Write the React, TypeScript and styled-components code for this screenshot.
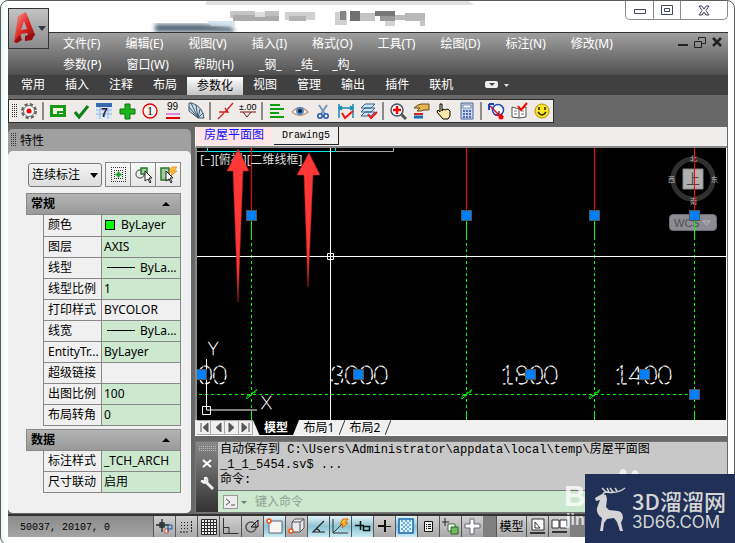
import React from 'react';
import styled, { createGlobalStyle, css } from 'styled-components';

const ui = '"Noto Sans", "Noto Sans CJK SC", sans-serif';
const mono = '"Liberation Mono", "Noto Sans CJK SC", monospace';

const GlobalStyle = createGlobalStyle`
  * { box-sizing: border-box; }
  body { margin: 0; background: #fff; font: 12px/16px ${ui}; color: #000; }
  button { font: inherit; color: inherit; padding: 0; border: 0; background: none; cursor: pointer; }
  svg { display: block; flex: none; }
`;

const Page = styled.div`
  position: relative;
  overflow: hidden;
`;

const Frame = styled.div`
  position: relative;
  display: flex;
  flex-direction: column;
  min-height: 100vh;
  padding: 0 6px 7px 7px;
  border: 1px solid #5c5c5c;
  border-radius: 8px;
  background: linear-gradient(90deg, #e2f8f8, #fff 6px);
  overflow: hidden;
`;

const TitleBar = styled.header`
  display: flex;
  justify-content: space-between;
  align-items: flex-start;
  height: 31px;
  padding-left: 142px;
  background: #fff;
`;

const WindowButtons = styled.div`
  display: flex;
  border: 1px solid #8a8a8a;
  border-top: 0;
  border-radius: 0 0 5px 5px;
`;

const WindowButton = styled.button<{ $wide?: boolean }>`
  display: grid;
  place-items: center;
  width: ${p => (p.$wide ? 47 : 27)}px;
  height: 18px;
  & + & { border-left: 1px solid #8a8a8a; }
`;

const AppButton = styled.button`
  position: absolute;
  left: 7px;
  top: 7px;
  width: 41px;
  height: 41px;
  border: 1px solid #333;
  background: linear-gradient(#c4c4c4, #8a8a8a);
`;

const Shell = styled.div`
  flex: 1;
  display: flex;
  flex-direction: column;
  background: #686868;
`;

const MenuBar = styled.nav`
  display: flex;
  justify-content: space-between;
  padding: 0 6px 0 55px;
  border-top: 1px solid #333;
  background: linear-gradient(#a0a0a0, #505050);
  color: #fff;
`;

const MenuRow = styled.div`
  display: flex;
  gap: 25px;
  height: 21px;
  align-items: center;
`;

const ShortMenus = styled.div`
  display: flex;
  gap: 14px;
`;

const MdiButtons = styled.div`
  display: flex;
  gap: 6px;
  height: 18px;
  align-items: center;
`;

const Ribbon = styled.nav`
  display: flex;
  height: 20px;
  padding-left: 3px;
  background: #404040;
  color: #fff;
`;

const RibbonTab = styled.button<{ $active?: boolean }>`
  padding: 0 10px;
  ${p => p.$active && css`
    margin-top: 2px;
    background: linear-gradient(#fff, #c4c4c4);
    color: #000;
    line-height: 14px;
  `}
`;

const RibbonToggle = styled.button`
  margin-left: 22px;
`;

const Toolbar = styled.div`
  display: flex;
  align-self: flex-start;
  height: 24px;
  margin: 4px 0;
  border: 1px solid #2c2c2c;
  background: #efebe8;
`;

const ToolButton = styled.button`
  display: grid;
  place-items: center;
  width: 23px;
`;

const ToolSeparator = styled.span`
  width: 2px;
  margin: 2px;
  background: #8a8a8a;
`;

const Grip = styled.span<{ $surface: string }>`
  width: 5px;
  height: 14px;
  margin: 4px 0 4px 3px;
  background:
    repeating-linear-gradient(0deg, ${p => p.$surface} 0 1px, transparent 1px 2px),
    repeating-linear-gradient(90deg, #333 0 1px, transparent 1px 2px);
`;

const Workspace = styled.main`
  flex: 1;
  display: grid;
  grid-template-columns: 183px minmax(0, 1fr);
  gap: 4px;
  padding-bottom: 1px;
`;

const Palette = styled.aside`
  display: flex;
  flex-direction: column;
  margin-top: 2px;
  border-radius: 5px;
  background: #a0a0a0;
`;

const PaletteTitle = styled.h2`
  display: flex;
  gap: 4px;
  height: 22px;
  margin: 0;
  font: inherit;
  line-height: 24px;
`;

const PaletteBody = styled.div`
  flex: 1;
  padding: 11px 10px 20px 18px;
  border-radius: 5px;
  background: #f0f0f0;
`;

const SelectionRow = styled.div`
  display: flex;
  gap: 3px;
  align-items: center;
  padding: 0 0 6px 2px;
`;

const SelectWrap = styled.div`
  position: relative;
  width: 75px;
  svg { position: absolute; right: 4px; top: 10px; pointer-events: none; }
`;

const Select = styled.select`
  display: block;
  appearance: none;
  width: 100%;
  height: 24px;
  padding: 0 3px;
  border: 1px solid #777;
  border-radius: 3px;
  background: linear-gradient(#f4f4f4, #ddd);
  font: inherit;
  color: inherit;
`;

const ButtonGroup = styled.div`
  display: flex;
  border: 1px solid #888;
  border-right: 0;
`;

const GroupButton = styled.button`
  display: grid;
  place-items: center;
  width: 25px;
  height: 23px;
  border-right: 1px solid #888;
  background: linear-gradient(#f8f8f8, #e6e6e6);
`;

const Section = styled.section`
  & + & { margin-top: 3px; }
`;

const SectionHeader = styled.button`
  display: flex;
  justify-content: space-between;
  align-items: center;
  width: 100%;
  height: 22px;
  padding: 0 10px 0 4px;
  border: 1px solid #888;
  background: linear-gradient(#b4b4b4, #999);
  font-weight: 700;
`;

const PropertyTable = styled.table`
  width: calc(100% - 17px);
  margin-left: 17px;
  table-layout: fixed;
  border-collapse: collapse;
  th, td {
    height: 21px;
    padding: 0 0 0 4px;
    border: 1px solid #888;
    border-top: 0;
    text-align: left;
    font-weight: 400;
    white-space: nowrap;
    overflow: hidden;
    text-overflow: clip;
    line-height: 16px;
  }
  th { width: 58px; }
  td { padding-left: 2px; }
`;

const ValueCell = styled.td<{ $plain?: boolean }>`
  background: ${p => (p.$plain ? '#f0f0f0' : '#cce8cf')};
`;

const ValueContent = styled.div`
  display: flex;
  align-items: center;
`;

const Swatch = styled.span`
  width: 10px;
  height: 10px;
  margin: 0 6px 0 1px;
  border: 1px solid #000;
  background: #0f0;
`;

const LineSample = styled.span`
  width: 28px;
  height: 1px;
  margin: 0 5px 0 3px;
  background: #000;
`;

const Documents = styled.div`
  display: flex;
  flex-direction: column;
  min-width: 0;
  padding-right: 1px;
`;

const DocumentTabs = styled.nav`
  display: flex;
  gap: 2px;
  height: 21px;
  padding-bottom: 1px;
  border-left: 1px solid #fff;
  border-bottom: 2px solid #888;
  background: #f0eeec;
`;

const DocumentTab = styled.button<{ $current?: boolean }>`
  padding: 0 8px;
  font-family: ${mono};
  ${p => p.$current
    ? css`background: #ffe5e5; color: #1010ff;`
    : css`
      font-size: 10px;
      border-right: 1px solid #222;
      border-bottom: 1px solid #222;
    `}
`;

const Canvas = styled.section`
  position: relative;
  flex: 1;
  min-height: 272px;
  border-left: 2px solid #888;
  border-right: 1px solid #fff;
  background: #000;
  overflow: hidden;
`;

const Drawing = styled.svg`
  position: absolute;
  inset: 0;
  width: 100%;
  height: 100%;
`;

const ViewControls = styled.div`
  position: absolute;
  left: 3px;
  top: 4px;
  display: flex;
  color: #ddd;
`;

const WcsButton = styled.button`
  position: absolute;
  right: 9px;
  top: 66px;
  display: flex;
  align-items: center;
  justify-content: space-between;
  width: 48px;
  height: 17px;
  padding: 0 5px 0 4px;
  border: 1px solid #6c6c74;
  border-radius: 4px;
  background: #8c8c94;
  color: #505058;
  font: 11px/14px "Liberation Sans", sans-serif;
`;

const LayoutTabs = styled.nav`
  display: flex;
  height: 16px;
  margin-bottom: 5px;
  padding-left: 2px;
  border-bottom: 1px solid #fff;
  background: #f0f0f0;
`;

const LayoutNav = styled.button`
  display: grid;
  place-items: center;
  width: 14px;
  border: 1px solid #aaa;
  border-left: 0;
`;

const LayoutTab = styled.button<{ $active?: boolean }>`
  width: ${p => (p.$active ? 46 : 40)}px;
  line-height: 15px;
  ${p => p.$active && css`
    background: #000;
    color: #fff;
    font-weight: 700;
    clip-path: polygon(0 0, 100% 0, 87% 100%, 14% 100%);
  `}
`;

const Command = styled.section`
  display: grid;
  grid-template-columns: 22px minmax(0, 1fr);
  border: 1px solid #777;
  border-right: 0;
`;

const CommandHandle = styled.div`
  display: flex;
  flex-direction: column;
  align-items: center;
  gap: 8px;
  padding-top: 4px;
  background: linear-gradient(#888, #333);
`;

const CommandContent = styled.div`
  min-width: 0;
  background: #c8c8c8;
`;

const History = styled.div`
  height: 48px;
  padding: 1px 2px;
  font: 12px/15px ${mono};
  overflow: hidden;
  white-space: nowrap;
`;

const CommandLine = styled.label`
  display: flex;
  align-items: center;
  gap: 4px;
  height: 22px;
  padding-left: 5px;
  border-top: 1px solid #777;
  background: #cce8cf;
`;

const CommandInput = styled.input`
  flex: 1;
  min-width: 0;
  margin-left: 4px;
  border: 0;
  outline: 0;
  padding: 0;
  background: none;
  font: 12px/16px ${ui};
  &::placeholder { color: #8f9e91; opacity: 1; }
`;

const StatusBar = styled.footer`
  display: flex;
  height: 23px;
  border-top: 2px solid #333;
  background: #808080;
`;

const Coordinates = styled.output`
  width: 145px;
  padding-left: 12px;
  background: linear-gradient(#8c8c8c, #a4a4a4);
  font: 10px/24px ${mono};
`;

const StatusButton = styled.button<{ $on?: boolean; $gap?: boolean; $wide?: boolean }>`
  display: grid;
  place-items: center;
  width: ${p => (p.$wide ? 30 : 22)}px;
  margin-left: ${p => (p.$gap ? 13 : 0)}px;
  border-left: 1px solid #555;
  background: ${p => (p.$on ? 'linear-gradient(#e4f2f6, #8cc4d4 50%, #c8eaf2)' : 'linear-gradient(#d0d0d0, #a8a8a8)')};
`;

const BaiduMark = styled.div`
  position: absolute;
  right: 103px;
  bottom: 12px;
  width: 68px;
  height: 66px;
  color: rgba(255, 255, 255, 0.75);
  font: 700 16px/20px "Liberation Sans", sans-serif;
  pointer-events: none;
  span { display: block; padding-left: 2px; }
  span:first-of-type { margin-top: 15px; padding: 0; font-size: 30px; line-height: 28px; }
  svg { position: absolute; left: 54px; top: 0; }
`;

const SiteMark = styled.a`
  position: absolute;
  right: 0;
  bottom: 0;
  display: flex;
  align-items: center;
  gap: 5px;
  width: 150px;
  height: 71px;
  padding: 0 0 0 9px;
  background: #213056;
  color: #d4d4d4;
  text-decoration: none;
`;

const SiteName = styled.span`
  display: block;
  font: 500 22px/24px "Noto Sans CJK SC", sans-serif;
  white-space: nowrap;
`;

const SiteDomain = styled.span`
  display: block;
  font: 17px/20px Inter, sans-serif;
`;

const tools: Record<string, React.ReactNode> = {
  设置: <><circle cx="9" cy="9" r="6.5" fill="#fff" stroke="#666" strokeWidth="3" strokeDasharray="3.1 2" /><circle cx="9" cy="9" r="5.5" fill="#f5f5f5" stroke="#777" /><circle cx="9" cy="9" r="2.5" fill="#f00" /></>,
  房间: <><path d="M1 3h16v12H1z" fill="#169a16" /><path d="M4 6h10v3H8v3H4z" fill="#f4f4e0" /><path d="M10 11h4v1h-4z" fill="#f4f4e0" /></>,
  检查: <path d="M3 10l4 5L16 4" fill="none" stroke="#108018" strokeWidth="3" />,
  日历: <><path d="M1 1h16v16H1z" fill="#dce8f8" /><path d="M1 1h16v4H1z" fill="#3b66ac" /><path d="M1 8h16M1 12h16M5 5v12M13 5v12" stroke="#9ab4dc" /><text x="6" y="15" fontFamily="Liberation Sans" fontWeight="700" fontSize="12" fill="#223">7</text></>,
  添加: <path d="M7 2h5v5h5v5h-5v5H7v-5H2V7h5z" fill="#1cb51c" stroke="#08720c" />,
  编号: <><circle cx="9" cy="9" r="7" fill="#fff4ef" stroke="#e00000" strokeWidth="1.3" /><text x="6" y="13" fontFamily="Liberation Serif" fontSize="12">1</text></>,
  标高尺寸: <><text x="3" y="8" fontFamily="Liberation Sans" fontSize="10">99</text><path d="M2 12h14" stroke="#d020d0" /><path d="M2 16h14" stroke="#e00000" strokeWidth="2" /></>,
  楼梯: <><path d="M2 1h3q11 4 12 15h-6L2 9z" fill="#c5e1f0" stroke="#456" /><path d="M11 16L4 1M11 16L9 3M11 16l2-9M11 16l5-5M2 5l9 11" fill="none" stroke="#456" /></>,
  折线: <path d="M2 17l6-6M3 10h9L9 6M9 10l8-9" fill="none" stroke="#d02020" strokeWidth="1.3" />,
  标高: <><text x="0" y="8" fontFamily="Liberation Sans" fontSize="9">±.00</text><path d="M1 10h16M4 10l4 5 4-5" fill="none" stroke="#711" /></>,
  对齐: <path d="M2 3h10M2 7h14M2 11h9M2 15h14" stroke="#0ca00c" strokeWidth="2" />,
  显示: <><path d="M1 10Q9 1 17 10Q9 17 1 10" fill="#fff" stroke="#c49880" strokeWidth="1.5" /><circle cx="9" cy="9" r="4" fill="#5588bd" /><circle cx="9" cy="9" r="2" fill="#14253f" /></>,
  剪切: <><path d="M5 3l6 9M13 3L7 12" stroke="#7898c0" strokeWidth="2" /><circle cx="6" cy="14" r="2.2" fill="none" stroke="#235cae" strokeWidth="1.6" /><circle cx="12" cy="14" r="2.2" fill="none" stroke="#235cae" strokeWidth="1.6" /></>,
  尺寸检查: <><path d="M2 2v14M16 2v14M2 6h14M5 4L2 6l3 2M13 4l3 2-3 2" fill="none" stroke="#1589b4" strokeWidth="1.5" /><path d="M5 11l3 5 8-7" fill="none" stroke="#f01515" strokeWidth="2" /></>,
  图层检查: <><path d="M5 2h10l-4 4H1zM5 6h10l-4 4H1zM5 10h10l-4 4H1z" fill="#cee6f8" stroke="#336591" /><path d="M8 12l3 4 6-6" fill="none" stroke="#f01515" strokeWidth="2" /></>,
  放大: <><path d="M12 12l5 5" stroke="#555" strokeWidth="3" /><circle cx="8" cy="8" r="6" fill="#fff" stroke="#456" strokeWidth="1.5" /><path d="M8 4v8M4 8h8" stroke="#f00" strokeWidth="2.5" /></>,
  格式刷: <><path d="M2 6l4-3 3-1h8v6h-5l-3 1H5l3-3z" fill="#e5b454" stroke="#6a4d15" /><path d="M2 12h9" stroke="#e42020" strokeWidth="2" /><path d="M2 15h9" stroke="#1470ba" strokeWidth="3" /></>,
  平移: <path d="M5 2h2v7l1-2 2 1 2-1 2 1 1 1v5l-2 3H8L2 10l1-2 2 2z" fill="#ffe8aa" stroke="#000" />,
  计算器: <><path d="M3 1h12v16H3z" fill="#c8d6ef" stroke="#4b6593" /><path d="M5 3h8v3H5z" fill="#fff" stroke="#4b6593" strokeWidth=".7" /><path d="M5 9h8M5 12h8M5 15h8" stroke="#536caf" strokeWidth="2" strokeDasharray="2 1" /></>,
  选择: <><circle cx="11" cy="8" r="5.500" fill="#fff" stroke="#1948c0" strokeWidth="1.5" /><path d="M2 2h5M2 2v6" fill="none" stroke="#1948c0" strokeWidth="2" /><path d="M3 4l9 9M12 9v4H8" fill="none" stroke="#b81830" strokeWidth="1.5" /><circle cx="14" cy="15" r="2.5" fill="#f00" /></>,
  手册: <><path d="M2 5l7 2 7-2v10l-7 1-7-1zM9 7v9" fill="#fff" stroke="#555" /><path d="M4 9h3M4 12h3M11 9h3M11 12h3" stroke="#777" /><path d="M8 4l3 4 6-7" fill="none" stroke="#f00" strokeWidth="2" /></>,
  表情: <><circle cx="9" cy="9" r="7" fill="#ffe527" stroke="#a79000" /><path d="M6 5v3M12 5v3M5 10q4 6 8 0" fill="none" stroke="#332d00" strokeWidth="1.6" /></>,
};

const toolGroups = [
  ['设置'],
  ['房间', '检查', '日历', '添加', '编号', '标高尺寸', '楼梯'],
  ['折线', '标高'],
  ['对齐', '显示', '剪切', '尺寸检查', '图层检查'],
  ['放大', '格式刷', '平移', '计算器'],
  ['选择', '手册', '表情'],
];

const statusTools: { label: string; on?: boolean; art: React.ReactNode }[] = [
  { label: '推断约束', art: <><path d="M0 7h13M6 1v13M4 5h4v4H4z" fill="none" stroke="#222a33" strokeWidth="1.3" /><path d="M9 11h3v4H9z" fill="#fff" stroke="#e05020" /><path d="M12 14V7h4v4h-4" fill="none" stroke="#1559a0" /></> },
  { label: '捕捉', art: <><path d="M3 4.500h9M3 7.500h9M3 10.500h9" stroke="#222" strokeDasharray="1 2" /><path d="M2 14h9M13.500 3v11" stroke="#222" strokeDasharray="2 1" /></> },
  { label: '栅格', art: <path d="M1.500 1.500h15v15h-15zM4.500 1v15M7.500 1v15M10.500 1v15M13.500 1v15M1 4.500h15M1 7.500h15M1 10.500h15M1 13.500h15" fill="#eee" stroke="#29292c" /> },
  { label: '正交', art: <path d="M1.500 0v15.500h15M1 9.500h6v6" fill="none" stroke="#333" /> },
  { label: '极轴追踪', art: <><circle cx="7" cy="9" r="5" fill="none" stroke="#555" strokeWidth="1.5" /><path d="M7 9l7-7v7H7" fill="none" stroke="#111" /></> },
  { label: '对象捕捉', on: true, art: <><path d="M3 3h13v12H3z" fill="#f6f6f6" stroke="#667" /><circle cx="3" cy="3" r="2" fill="#fff" stroke="#f05015" strokeWidth="1.5" /></> },
  { label: '三维对象捕捉', art: <><path d="M4 4l3-3h9v9l-4 4H4zM4 4h8v9M12 4l4-3" fill="#e8eaed" stroke="#555" /><circle cx="3" cy="13" r="2" fill="#fff" stroke="#f05015" strokeWidth="1.5" /></> },
  { label: '对象追踪', on: true, art: <path d="M14 3L3 14h12M6 11q3 0 4 3" fill="none" stroke="#222" strokeWidth="1.2" /> },
  { label: '动态 UCS', on: true, art: <><path d="M1 1v14h15M1 15L12 4" fill="none" stroke="#333" /><path d="M11 1h5l-3 4h3l-6 5 1-4H8z" fill="#ffbd22" stroke="#d96818" /></> },
  { label: '动态输入', on: true, art: <path d="M1 7.500h9M6.500 3v9M9.500 8.500h6v4h-6z" fill="none" stroke="#111" strokeWidth="1.500" /> },
  { label: '线宽', art: <><path d="M2 8h7M9 2v12" stroke="#111" strokeWidth="2" /><path d="M9 8.500h6" stroke="#111" /></> },
  { label: '透明度', on: true, art: <><path d="M1 1h14v14H1z" fill="#d8f4ff" stroke="#1765ad" strokeWidth="1.5" /><path d="M3 3h10M3 7h10M3 11h10" stroke="#75add4" strokeWidth="2" strokeDasharray="2 2" /><path d="M5 5h8M5 9h8M5 13h8" stroke="#75add4" strokeWidth="2" strokeDasharray="2 2" /></> },
  { label: '快捷特性', art: <><path d="M4.500 3.500h8v10h-8z" fill="#eee" stroke="#111" /><path d="M6 6.500h1M8 6.500h3M6 8.500h1M8 8.500h3M6 10.500h1M8 10.500h3" stroke="#111" /></> },
  { label: '选择循环', art: <><path d="M0 4h7M3 0v8" stroke="#222" /><path d="M6 6h7v7H6z" fill="#fff" stroke="#357735" /><path d="M9 9h7v7H9z" fill="#72b958" stroke="#246924" /></> },
  { label: '注释监视器', art: <path d="M6 1h4v5h6v4h-6v6H6v-6H1V6h5z" fill="#fff" stroke="#667" /> },
];

const general: [string, string][] = [
  ['颜色', 'ByLayer'], ['图层', 'AXIS'], ['线型', 'ByLa...'], ['线型比例', '1'], ['打印样式', 'BYCOLOR'],
  ['线宽', 'ByLa...'], ['EntityTr...', 'ByLayer'], ['超级链接', ''], ['出图比例', '100'], ['布局转角', '0'],
];
const data: [string, string][] = [['标注样式', '_TCH_ARCH'], ['尺寸联动', '启用']];

const axes = [54, 269, 397, 497];
const grips = [[54, 67], [269, 67], [397, 67], [497, 67], [4, 226], [161, 226], [333, 226], [447, 226], [497, 246]];
const mosaic = [[230, 10, 25, 7, '#c5c5c5'], [233, 14, 46, 6, '#aaa'], [255, 11, 10, 5, '#ddd'], [265, 10, 14, 5, '#c0c0c0'], [285, 11, 30, 8, '#d0d0d0'], [289, 15, 17, 5, '#b2b2b2'], [335, 11, 12, 13, '#d0d0d0'], [340, 10, 6, 9, '#858585'], [350, 10, 10, 10, '#707070'], [360, 12, 15, 8, '#c4c4c4'], [375, 10, 20, 5, '#777'], [380, 15, 15, 5, '#999'], [395, 14, 10, 5, '#bbb'], [405, 12, 20, 8, '#b8b8b8'], [385, 20, 10, 5, '#d4d4d4'], [420, 19, 5, 6, '#c4c4c4']] as const;

function Properties({ title, rows }: { title: string; rows: [string, string][] }) {
  return (
    <Section>
      <SectionHeader>{title}<svg width="8" height="4"><path d="M0 4l4-4 4 4z" /></svg></SectionHeader>
      <PropertyTable>
        <tbody>
          {rows.map(([name, value]) => (
            <tr key={name}>
              <th scope="row">{name}</th>
              <ValueCell $plain={name === '打印样式' || name === '超级链接'}>
                <ValueContent>
                  {name === '颜色' && <Swatch />}
                  {(name === '线型' || name === '线宽') && <LineSample />}
                  {value}
                </ValueContent>
              </ValueCell>
            </tr>
          ))}
        </tbody>
      </PropertyTable>
    </Section>
  );
}

function Model() {
  return (
    <Canvas aria-label="房屋平面图">
      <Drawing>
        <path d="M0 3.5h10M139 3.5h57.500V0" fill="none" stroke="#aaa" />
        <path d="M10.500 0v3.500h128V0" fill="none" stroke="#0ee" />
        {axes.map(x => (
          <g key={x} fill="none">
            <path d={`M${x + 0.5} 0v67`} stroke="#f00" />
            <path d={`M${x + 0.5} 67v25M${x + 0.5} 263v9`} stroke="#0f0" />
            <path d={`M${x + 0.5} 95V263`} stroke="#0f0" strokeDasharray="3 3" />
          </g>
        ))}
        <path d="M2 246.500H491" stroke="#0f0" strokeDasharray="3 3" />
        {axes.slice(0, 3).map(x => <path key={x} d={`M${x - 5} 251l2-4 3 1 1-4 3 1 2-4M${x - 4} 251l9-9`} fill="none" stroke="#0d0" />)}
        <g fill="none" stroke="#fff" strokeDasharray="4 3" fontFamily="Lato" fontWeight="100" fontSize="25">
          <text x="1" y="236">00</text>
          <text x="133" y="236">3000</text>
          <text x="303" y="236">1800</text>
          <text x="417" y="236">1400</text>
        </g>
        <g fill="none" stroke="#fff">
          <path d="M0 108.500H4000M133.500 0V4000M9.500 211V262H60M5.500 258.500h8v8h-8z" />
          <path d="M130.500 105.500h6v6h-6z" />
        </g>
        <g fill="#fff" stroke="#fff" strokeWidth="0.6" fontFamily="Lato" fontWeight="100" fontSize="18"><text x="11" y="207">Y</text><text x="64" y="261">X</text></g>
        <circle cx="496" cy="31" r="20" fill="none" stroke="#303030" strokeWidth="5" />
        <path d="M486 21h20v20h-20z" fill="#b0b0b0" stroke="#888" />
        <g fill="#bbb" fontFamily="Noto Sans CJK SC" fontSize="7"><text x="493" y="13">北</text><text x="493" y="56">南</text><text x="471" y="34">西</text><text x="514" y="34">东</text><text x="489" y="36" fontSize="14" fill="#444">上</text></g>
        <path d="M497.500 0V62" stroke="#f00" />
      </Drawing>
      <ViewControls><button>[−]</button><button>[俯视]</button><button>[二维线框]</button></ViewControls>
      <WcsButton>WCS<svg width="9" height="6"><path d="M1 1h7L4.500 5z" fill="none" stroke="#bbb" /></svg></WcsButton>
      <Drawing pointerEvents="none">
        <path d="M497.500 72V92" stroke="#0f0" />
        {grips.map(([x, y]) => <rect key={`${x}-${y}`} x={x - 4.5} y={y - 4.5} width="10" height="10" fill="#007fff" stroke="#555" />)}
        <path d="M41 1L30 23h6L41 154l5-131h6zM112 5L100 27h7l4 112 5-112h7z" fill="#ff3737" stroke="#b42020" strokeWidth=".5" />
      </Drawing>
    </Canvas>
  );
}

export default function App() {
  return (
    <Page>
      <GlobalStyle />
      <Frame>
        <TitleBar>
          <svg width="330" height="31" viewBox="150 0 330 31">
            <defs><filter id="soft"><feGaussianBlur stdDeviation="2" /></filter></defs>
            <path d="M207 0h262l5 4H205z" fill="#e0e0e0" />
            <path d="M155 23h48l29 3 3 5h-80z" fill="#586c7c" filter="url(#soft)" />
            <path d="M207 20h28v5h-24z" fill="#c5dce8" opacity=".7" />
            {mosaic.map(([x, y, w, h, fill]) => <rect key={`${x}-${y}`} x={x} y={y} width={w} height={h} fill={fill} />)}
          </svg>
          <WindowButtons>
            <WindowButton aria-label="最小化"><svg width="12" height="8"><path d="M.5 3.500h11v4H.5z" fill="#fff" stroke="#446" /></svg></WindowButton>
            <WindowButton aria-label="最大化"><svg width="12" height="10"><path d="M.5.5h11v9H.5zM3.500 3.500h5v3h-5z" fill="#fff" stroke="#446" /></svg></WindowButton>
            <WindowButton $wide aria-label="关闭"><svg width="12" height="11"><path d="M1 1h3l2 3 2-3h3L8 5.500 11 10H8L6 7l-2 3H1l3-4.500z" fill="#fff" stroke="#446" /></svg></WindowButton>
          </WindowButtons>
        </TitleBar>
        <Shell>
          <MenuBar>
            <div>
              <MenuRow>{['文件(F)', '编辑(E)', '视图(V)', '插入(I)', '格式(O)', '工具(T)', '绘图(D)', '标注(N)', '修改(M)'].map(t => <button key={t}>{t}</button>)}</MenuRow>
              <MenuRow>
                {['参数(P)', '窗口(W)', '帮助(H)'].map(t => <button key={t}>{t}</button>)}
                <ShortMenus>{['_钢_', '_结_', '_构_'].map(t => <button key={t}>{t}</button>)}</ShortMenus>
              </MenuRow>
            </div>
            <MdiButtons>
              <button aria-label="最小化图形"><svg width="10" height="10"><path d="M0 8h10" stroke="#222" strokeWidth="2" /></svg></button>
              <button aria-label="还原图形"><svg width="12" height="11"><path d="M4.500 3V.5h7v6H8M.5 4.500h7v6h-7z" fill="none" stroke="#222" /></svg></button>
              <button aria-label="关闭图形"><svg width="10" height="10"><path d="M1 1l8 8M9 1L1 9" stroke="#222" strokeWidth="2.500" /></svg></button>
            </MdiButtons>
          </MenuBar>
          <Ribbon>
            {['常用', '插入', '注释', '布局', '参数化', '视图', '管理', '输出', '插件', '联机'].map(t => <RibbonTab key={t} $active={t === '参数化'}>{t}</RibbonTab>)}
            <RibbonToggle aria-label="功能区选项"><svg width="25" height="8"><rect width="13" height="7" rx="2" fill="#eee" /><path d="M4 2h6L7 5z" fill="#444" /><path d="M19 3h5l-2.500 3z" fill="#ddd" /></svg></RibbonToggle>
          </Ribbon>
          <Toolbar role="toolbar">
            <Grip $surface="#efebe8" />
            {toolGroups.map((group, i) => (
              <React.Fragment key={i}>
                {i > 0 && <ToolSeparator />}
                {group.map(name => <ToolButton key={name} aria-label={name}><svg width="18" height="18">{tools[name]}</svg></ToolButton>)}
              </React.Fragment>
            ))}
          </Toolbar>
          <Workspace>
            <Palette>
              <PaletteTitle><Grip $surface="#a0a0a0" />特性</PaletteTitle>
              <PaletteBody>
                <SelectionRow>
                  <SelectWrap>
                    <Select aria-label="对象类型"><option>连续标注</option></Select>
                    <svg width="8" height="5"><path d="M0 0h8L4 5z" /></svg>
                  </SelectWrap>
                  <ButtonGroup>
                    <GroupButton aria-label="切换选择"><svg width="17" height="17"><path d="M1 1.500h15M1 15.500h15M1.500 1v15M15.500 1v15M4 4.500h9M4 12.500h9M4.500 4v9M12.500 4v9" fill="none" stroke="#333" strokeDasharray="1 1" /><path d="M8.500 5.500v6M5.500 8.500h6" stroke="#109b20" strokeWidth="2" /></svg></GroupButton>
                    <GroupButton aria-label="选择对象"><svg width="17" height="17"><circle cx="5" cy="8" r="4" fill="none" stroke="#777" strokeWidth="1.500" /><path d="M6 2h6v6H6z" fill="#a5c9a1" stroke="#237d27" strokeWidth="1.500" /><path d="M10 5v10l3-2 2 4 1-1-2-4h3z" fill="#fff" stroke="#222" /></svg></GroupButton>
                    <GroupButton aria-label="快速选择"><svg width="17" height="17"><path d="M1 2h8v12H1z" fill="#a5c9a1" stroke="#287727" strokeWidth="1.500" /><path d="M12 1l5 0-3 4h3l-6 5 1-4h-3z" fill="#ffc12b" stroke="#e97b20" strokeWidth=".7" /><path d="M6 5v10l3-2 2 4 1-1-2-4h3z" fill="#fff" stroke="#222" /></svg></GroupButton>
                  </ButtonGroup>
                </SelectionRow>
                <Properties title="常规" rows={general} />
                <Properties title="数据" rows={data} />
              </PaletteBody>
            </Palette>
            <Documents>
              <DocumentTabs><DocumentTab $current>房屋平面图</DocumentTab><DocumentTab>Drawing5</DocumentTab></DocumentTabs>
              <Model />
              <LayoutTabs>
                {['M3 1v9M10 1L5 5.500l5 4.500z', 'M9 1L4 5.500 9 10z', 'M3 1l5 4.500L3 10z', 'M2 1l5 4.500L2 10zM9 1v9'].map((d, i) => (
                  <LayoutNav key={d} aria-label={['首个布局', '上一个布局', '下一个布局', '末尾布局'][i]}><svg width="12" height="11"><path d={d} fill="#555" stroke="#555" /></svg></LayoutNav>
                ))}
                <LayoutTab $active>模型</LayoutTab>
                <LayoutTab>布局1</LayoutTab>
                <svg width="6" height="15"><path d="M6 0L0 15" stroke="#333" /></svg>
                <LayoutTab>布局2</LayoutTab>
                <svg width="6" height="15"><path d="M6 0L0 15" stroke="#333" /></svg>
              </LayoutTabs>
              <Command>
                <CommandHandle>
                  <svg width="17" height="5"><path d="M0 .5h17M0 2.500h17M0 4.500h17" stroke="#bbb" strokeDasharray="1 1" /></svg>
                  <button aria-label="关闭命令行"><svg width="10" height="9"><path d="M1 1l8 7M9 1L1 8" stroke="#fff" strokeWidth="2" /></svg></button>
                  <button aria-label="自定义"><svg width="15" height="15"><path d="M4 4l9 9" stroke="#eee" strokeWidth="3" /><path d="M5 1v4H1" fill="none" stroke="#eee" strokeWidth="2" /><path d="M6 1q4 5-2 6L1 5" fill="none" stroke="#eee" strokeWidth="2" /></svg></button>
                </CommandHandle>
                <CommandContent>
                  <History role="log">自动保存到 C:\Users\Administrator\appdata\local\temp\房屋平面图<br />_1_1_5454.sv$ ...<br />命令:</History>
                  <CommandLine>
                    <svg width="24" height="14"><rect x=".5" y=".5" width="14" height="13" fill="#eee" stroke="#999" /><path d="M3 4l4 3-4 3M8 10h4" fill="none" stroke="#555" /><path d="M18 6h6l-3 3z" fill="#777" /></svg>
                    <CommandInput aria-label="命令" placeholder="键入命令" />
                  </CommandLine>
                </CommandContent>
              </Command>
            </Documents>
          </Workspace>
          <StatusBar>
            <Coordinates>50037, 20107, 0</Coordinates>
            {statusTools.map(t => <StatusButton key={t.label} $on={t.on} aria-label={t.label}><svg width="17" height="17">{t.art}</svg></StatusButton>)}
            <StatusButton $gap $wide>模型</StatusButton>
            <StatusButton aria-label="布局"><svg width="17" height="17"><path d="M3 1h12v11H3z" fill="#fff" stroke="#333" /><path d="M6 4v6h5z" fill="none" stroke="#333" /><path d="M1 15h15" stroke="#333" strokeWidth="2" /></svg></StatusButton>
            <StatusButton aria-label="快速查看"><svg width="17" height="17"><path d="M1 2h7v8H1zM9 2h7v8H9z" fill="#fff" stroke="#333" /><path d="M1 14h15" stroke="#333" strokeWidth="2" /></svg></StatusButton>
          </StatusBar>
        </Shell>
        <AppButton aria-label="应用程序菜单">
          <svg width="39" height="39">
            <defs><linearGradient id="red" x2="1" y2="1"><stop stopColor="#f8a298" /><stop offset=".5" stopColor="#df2727" /><stop offset="1" stopColor="#7f0909" /></linearGradient></defs>
            <path d="M9 7l8-4 9 23-4 4-4-6-6 1-1 5-6 3zM15 12l-3 9 6-1z" fill="url(#red)" fillRule="evenodd" />
            <path d="M5 33l6-7 2 5-5 3zM16 27l10-3-3 7-7 1z" fill="#980d12" />
            <path d="M29 17h8l-4 5z" fill="#333a44" />
          </svg>
        </AppButton>
      </Frame>
      <BaiduMark><svg width="24" height="20"><ellipse cx="5" cy="8" rx="4" ry="6" fill="#eee" /><ellipse cx="17" cy="9" rx="4" ry="6" fill="#eee" /></svg><span>B</span><span>jin</span></BaiduMark>
      <SiteMark href="#">
        <svg width="33" height="46" viewBox="0 0 33 46" fill="#d4d4d4" stroke="#d4d4d4">
          <path d="M1 11l7-4 4 1 1 4-1 8 3 3 9 1q5 1 5 7l-2 5 2 8h-3l-3-9-3-4-7 1-3 4-1 8H6l2-13q-6-4-5-10l3-8-4 1z" stroke="none" />
          <path d="M9 8q0-3 4-3 10 2 18-4M12 5l-4-4M15 5l-2-4M19 5l-3-4M23 4l-2-3" fill="none" strokeWidth="1.500" />
        </svg>
        <span><SiteName>3D溜溜网</SiteName><SiteDomain>3D66.COM</SiteDomain></span>
      </SiteMark>
    </Page>
  );
}
